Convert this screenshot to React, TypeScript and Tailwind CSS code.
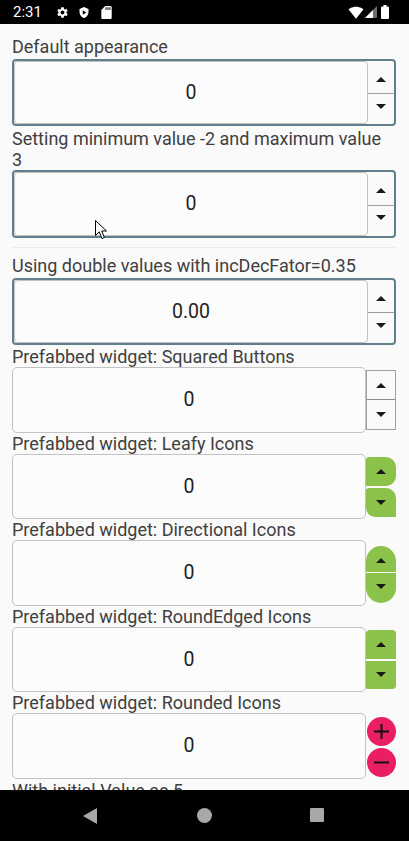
import React from "react";

type Dir = "up" | "down";

function Tri({ dir, color = "#1a1a1a" }: { dir: Dir; color?: string }) {
	return (
		<svg width="10" height="5" viewBox="0 0 10 5" className="block">
			<polygon points={dir === "up" ? "0,5 5,0 10,5" : "0,0 10,0 5,5"} fill={color} />
		</svg>
	);
}

function StatusBar() {
	return (
		<div className="flex h-[24px] shrink-0 items-center bg-black pl-[13px] pr-[20px] text-white">
			<span className="text-[15px] leading-none font-['Roboto',sans-serif]">2:31</span>
			<svg width="13" height="13" viewBox="0 0 24 24" className="ml-[14px]">
				<path
					fill="#fff"
					d="M19.14 12.94c.04-.3.06-.61.06-.94 0-.32-.02-.64-.07-.94l2.03-1.58c.18-.14.23-.41.12-.61l-1.92-3.32c-.12-.22-.37-.29-.59-.22l-2.39.96c-.5-.38-1.03-.7-1.62-.94l-.36-2.540c-.04-.24-.24-.41-.48-.41h-3.84c-.24 0-.43.17-.47.41l-.36 2.54c-.59.24-1.13.57-1.62.94l-2.39-.96c-.22-.08-.47 0-.59.22L2.74 8.87c-.12.21-.08.47.12.61l2.03 1.58c-.05.3-.09.63-.09.94s.02.64.07.94l-2.03 1.58c-.18.14-.23.41-.12.61l1.92 3.32c.12.22.37.29.59.22l2.39-.96c.5.38 1.03.7 1.62.94l.36 2.54c.05.24.24.41.48.41h3.84c.24 0 .44-.17.47-.41l.36-2.54c.59-.24 1.13-.56 1.62-.94l2.39.96c.22.08.47 0 .59-.22l1.92-3.32c.12-.22.07-.47-.12-.61l-2.01-1.58zM12 15.6c-1.98 0-3.6-1.62-3.6-3.6s1.62-3.6 3.6-3.6 3.6 1.62 3.6 3.6-1.62 3.6-3.6 3.6z"
				/>
			</svg>
			<svg width="12" height="13" viewBox="0 0 24 24" className="ml-[9px]">
				<path fill="#fff" d="M12 1L3 5v6c0 5.55 3.84 10.74 9 12 5.16-1.26 9-6.45 9-12V5l-9-4z" />
				<path fill="#000" d="M9.5 7.5v9l7-4.5z" />
			</svg>
			<svg width="11" height="13" viewBox="4 2 16 20" className="ml-[11px]">
				<path
					fill="#fff"
					d="M18 2h-8L4.02 8 4 20c0 1.1.9 2 2 2h12c1.1 0 2-.9 2-2V4c0-1.1-.9-2-2-2zm-6 6h-1.5V4H12v4zm3 0h-1.5V4H15v4zm3 0h-1.5V4H18v4z"
				/>
			</svg>
			<div className="flex-1" />
			<svg width="16" height="13" viewBox="0 2 24 20">
				<path fill="#fff" d="M12.01 21.49L23.64 7c-.45-.34-4.93-4-11.64-4C5.28 3 .81 6.66.36 7l11.63 14.49.01.01.01-.01z" />
			</svg>
			<svg width="12" height="12" viewBox="0 0 12 12" className="ml-[1px]">
				<polygon points="0,12 12,12 12,0" fill="#6e6e6e" />
				<polygon points="0,12 8,12 8,4" fill="#fff" />
			</svg>
			<svg width="8" height="14" viewBox="0 0 8 14" className="ml-[4px]">
				<rect x="2.5" y="0" width="3" height="2" fill="#fff" />
				<rect x="0" y="1.5" width="8" height="12.5" rx="1" fill="#fff" />
			</svg>
		</div>
	);
}

function Label({ children, className = "" }: { children: React.ReactNode; className?: string }) {
	return <div className={`text-[18px] leading-[21px] text-[#404040] ${className}`}>{children}</div>;
}

function Value({ children }: { children: React.ReactNode }) {
	return <span className="text-[19.5px] text-[#222]">{children}</span>;
}

// bordered default widget, arrows hug the divider
function Classic({ value, h, upPad, downPad }: { value: string; h: string; upPad: string; downPad: string }) {
	return (
		<div className={`flex ${h} rounded-[4px] border-2 border-[#5f7f8d]`}>
			<div className="flex flex-1 items-center justify-center rounded-[4px] border border-[#c2c2c2] bg-[#fcfcfc]">
				<Value>{value}</Value>
			</div>
			<div className="flex w-[26px] flex-col">
				<div className={`flex flex-1 items-end justify-center ${upPad}`}>
					<Tri dir="up" />
				</div>
				<div className="h-px bg-[#9e9e9e]" />
				<div className={`flex flex-1 items-start justify-center ${downPad}`}>
					<Tri dir="down" />
				</div>
			</div>
		</div>
	);
}

function Prefab({ children }: { children: React.ReactNode }) {
	return (
		<div className="flex h-[65.5px] items-center">
			<div className="flex h-full flex-1 items-center justify-center rounded-[5px] border border-[#c2c2c2] bg-[#fcfcfc]">
				<Value>0</Value>
			</div>
			<div className="flex w-[30px] flex-col justify-center">{children}</div>
		</div>
	);
}

function Cursor() {
	return (
		<svg width="13" height="20" viewBox="0 0 13 20" className="pointer-events-none absolute left-[95px] top-[220px]">
			<path d="M0.5 0.5 L0.5 15.5 L4.2 11.8 L7 18.5 L9.4 17.5 L6.7 11 L11.5 11 Z" fill="#fff" stroke="#000" strokeWidth="1" strokeLinejoin="round" />
		</svg>
	);
}

function NavBar() {
	return (
		<div className="flex h-[51px] shrink-0 items-center bg-black">
			<div className="flex w-full">
				<div className="flex w-[136px] justify-end pr-[38px]">
					<svg width="16" height="16" viewBox="0 0 16 16">
						<polygon points="15,0 15,16 1,8" fill="#a8a8a8" />
					</svg>
				</div>
				<div className="flex flex-1 justify-center">
					<div className="h-[15px] w-[15px] rounded-full bg-[#a8a8a8]" />
				</div>
				<div className="flex w-[136px] justify-start pl-[37px]">
					<div className="h-[14px] w-[14px] rounded-[1px] bg-[#a8a8a8]" />
				</div>
			</div>
		</div>
	);
}

export default function App() {
	return (
		<div className="relative flex h-[841px] w-[409px] flex-col overflow-hidden bg-[#fafafa] font-['Roboto',sans-serif]">
			<StatusBar />
			<div className="flex-1 overflow-hidden px-[12px] pr-[13px]">
				<Label className="mt-[12px]">Default appearance</Label>
				<div className="mt-[2px]">
					<Classic value="0" h="h-[67px]" upPad="pb-[11px]" downPad="pt-[10px]" />
				</div>
				<Label className="mt-[2px]">
					Setting minimum value -2 and maximum value
					<br />3
				</Label>
				<Classic value="0" h="h-[68px]" upPad="pb-[12px]" downPad="pt-[9px]" />
				<div className="mt-[9px] h-px bg-[#ebebeb]" />
				<Label className="mt-[7px]">Using double values with incDecFator=0.35</Label>
				<div className="mt-[2px]">
					<Classic value="0.00" h="h-[67px]" upPad="pb-[11px]" downPad="pt-[10px]" />
				</div>

				<Label className="mt-[1px]">Prefabbed widget: Squared Buttons</Label>
				<Prefab>
					<div className="flex h-[60px] flex-col border border-[#a0a0a0]">
						<div className="flex flex-1 items-center justify-center">
							<Tri dir="up" />
						</div>
						<div className="h-px bg-[#8a8a8a]" />
						<div className="flex flex-1 items-center justify-center">
							<Tri dir="down" />
						</div>
					</div>
				</Prefab>

				<Label>Prefabbed widget: Leafy Icons</Label>
				<Prefab>
					<div className="flex flex-col gap-[2px] pt-[2px]">
						<div className="flex h-[29px] items-center justify-center rounded-tl-[3px] rounded-tr-[10px] rounded-br-[10px] bg-[#8bc34a]">
							<Tri dir="up" />
						</div>
						<div className="flex h-[29px] items-center justify-center rounded-tl-[3px] rounded-tr-[10px] rounded-bl-[9px] bg-[#8bc34a]">
							<Tri dir="down" />
						</div>
					</div>
				</Prefab>

				<Label>Prefabbed widget: Directional Icons</Label>
				<Prefab>
					<div className="flex flex-col gap-[1px] pt-[4px]">
						<div className="flex h-[26px] items-center justify-center rounded-t-full bg-[#8bc34a] pt-[2px]">
							<Tri dir="up" />
						</div>
						<div className="flex h-[30px] items-center justify-center rounded-b-full bg-[#8bc34a] pb-[3px]">
							<Tri dir="down" />
						</div>
					</div>
				</Prefab>

				<Label>Prefabbed widget: RoundEdged Icons</Label>
				<Prefab>
					<div className="flex flex-col gap-[2px]">
						<div className="flex h-[29px] items-center justify-center rounded-t-[4px] bg-[#8bc34a]">
							<Tri dir="up" />
						</div>
						<div className="flex h-[28px] items-center justify-center rounded-br-[4px] rounded-bl-[1px] bg-[#8bc34a]">
							<Tri dir="down" />
						</div>
					</div>
				</Prefab>

				<Label>Prefabbed widget: Rounded Icons</Label>
				<Prefab>
					<div className="flex flex-col items-center gap-[2px] pt-[3px]">
						<div className="flex h-[29px] w-[29px] items-center justify-center rounded-full bg-[#e91e63]">
							<svg width="17" height="17" viewBox="0 0 17 17">
								<path d="M8.5 1v15M1 8.5h15" stroke="#111" strokeWidth="2" />
							</svg>
						</div>
						<div className="flex h-[29px] w-[29px] items-center justify-center rounded-full bg-[#e91e63]">
							<svg width="17" height="17" viewBox="0 0 17 17">
								<path d="M1 8.5h15" stroke="#111" strokeWidth="2" />
							</svg>
						</div>
					</div>
				</Prefab>

				<Label className="mt-[1px]">With initial Value as 5</Label>
			</div>
			<NavBar />
			<Cursor />
		</div>
	);
}
